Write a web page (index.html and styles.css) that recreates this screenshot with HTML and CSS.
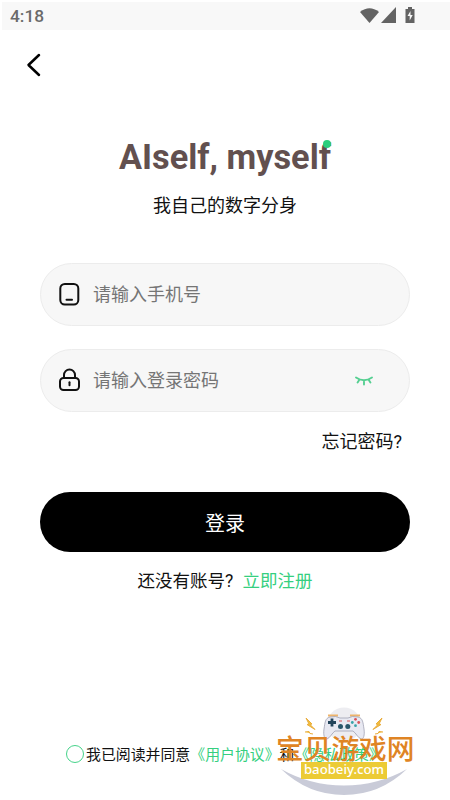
FILE: index.html
```html
<!DOCTYPE html>
<html lang="zh-CN">
<head>
<meta charset="utf-8">
<title>登录</title>
<link rel="stylesheet" href="styles.css">
</head>
<body>
<div class="screen">
  <header class="status">
    <span class="clock">4:18</span>
    <svg class="status-icons" width="56" height="18" viewBox="0 0 56 18">
      <path d="M0 5Q9.500-2.500 19 5L9.500 16Z"/>
      <path d="M36 0V16H21Z"/>
      <path d="M48 0h4v2h2.500v14h-9V2H48Z"/>
      <path class="bolt" d="M50.500 4l-3 5h2.200v4.500l3-5.500h-2.200z"/>
    </svg>
  </header>
  <nav class="nav">
    <svg width="16" height="24" viewBox="0 0 16 24"><path d="M13 2L2.500 12L13 22"/></svg>
  </nav>
  <main class="content">
    <h1 class="title">AIself, myself<i class="dot"></i></h1>
    <p class="subtitle">我自己的数字分身</p>
    <div class="field">
      <svg class="icon" width="22" height="24" viewBox="0 0 22 24"><rect x="2.300" y="2" width="18" height="20.500" rx="4.500"/><path d="M8.500 17.800h5.500"/></svg>
      <span class="placeholder">请输入手机号</span>
    </div>
    <div class="field">
      <svg class="icon" width="22" height="24" viewBox="0 0 22 24"><path d="M6 10V7a5.500 5.500 0 0 1 11 0v3"/><rect x="2" y="10" width="19" height="12" rx="3.500"/><path d="M11.500 14.300v3"/></svg>
      <span class="placeholder">请输入登录密码</span>
      <svg class="eye" width="18" height="10" viewBox="0 0 18 10"><path d="M1 1.500Q9 7 17 1.500M4.200 4L2.600 6.500M9 4.500V8.500M13.800 4L15.400 6.500"/></svg>
    </div>
    <a class="forgot">忘记密码?</a>
    <button class="login">登录</button>
    <p class="register"><span>还没有账号?</span><a class="link">立即注册</a></p>
  </main>
  <footer class="agreement">
    <span class="radio"></span>
    <span>我已阅读并同意<a class="link">《用户协议》</a>和<a class="link">《隐私政策》</a></span>
  </footer>
  <div class="watermark">
    <svg class="emblem" width="144" height="98" viewBox="0 0 144 98">
      <circle cx="72" cy="23.500" r="17" fill="#ededf1"/>
      <path d="M9 68Q36 94 72 94Q108 94 135 68Q106 84.500 72 84.500Q38 84.500 9 68Z" fill="#c9cbd8"/>
      <path d="M56 14.500h10M78 14.500h10" fill="none" stroke="#edb36a" stroke-width="2"/>
      <path d="M58 16Q64 14.500 68 17H76Q80 14.500 86 16C91 17 91 22 92 28C93 35 91 39 89 38C86 37 84 32 81 30H63C60 32 58 37 55 38C53 39 51 35 52 28C53 22 53 17 58 16Z" fill="#e8e9f2" stroke="#9fa1b3" stroke-width=".8"/>
      <path d="M56 21.500h8M60 17.500v8" stroke="#23445b" stroke-width="2.800"/>
      <g fill="#d95459"><circle cx="83.500" cy="18.300" r="1.400"/><circle cx="86.700" cy="21.500" r="1.400"/></g>
      <g fill="#39a4a8"><circle cx="83.500" cy="24.700" r="1.400"/><circle cx="80.300" cy="21.500" r="1.400"/></g>
      <path d="M67 20h3M75 20h3" stroke="#d95459" stroke-width="1.200"/>
      <g fill="#29566b"><circle cx="68.500" cy="25.500" r="2.500"/><circle cx="75.800" cy="25.500" r="2.500"/></g>
      <path d="M34 17l6 6-2 .5 5 5-8-5 2-.5zM110 17l-6 6 2 .5-5 5 8-5-2-.5zM33 31l4-.5 1 2 3 .5M111 31l-4-.5-1 2-3 .5" fill="#f3c23c" stroke="#e9ac3c"/>
    </svg>
    <span class="mark-name">宝贝游戏网</span>
    <span class="mark-url">baobeiy.com</span>
  </div>
</div>
</body>
</html>
```

FILE: styles.css
```css
* { box-sizing: border-box; }
body { margin: 0; background: #fff; }
.screen {
  position: relative;
  width: 450px;
  height: 800px;
  padding: 2px 0 0 2px;
  overflow: hidden;
  display: flex;
  flex-direction: column;
  font-family: "Roboto", "Noto Sans CJK SC", sans-serif;
  color: #111;
}
.status {
  height: 28px;
  flex: none;
  display: flex;
  align-items: center;
  justify-content: space-between;
  padding: 0 34px 0 8px;
  background: #f8f8f8;
}
.clock { font-size: 17.3px; font-weight: 500; color: #6a6a6a; line-height: 28px; }
.status-icons { fill: #636363; margin-top: 0; }
.status-icons .bolt { fill: #f8f8f8; }
.nav { height: 70px; padding: 23px 0 0 24px; }
.nav svg { display: block; fill: none; stroke: #000; stroke-width: 2.5; stroke-linecap: round; stroke-linejoin: round; }
.content { width: 370px; margin: 0 0 0 38px; display: flex; flex-direction: column; }
.title {
  position: relative;
  align-self: center;
  margin: 37px 0 0;
  font-size: 34.3px;
  line-height: 40px;
  font-weight: 700;
  color: #62504f;
  white-space: nowrap;
}
.dot { position: absolute; right: 0; top: 3px; width: 8px; height: 8px; border-radius: 50%; background: #2cce7c; }
.subtitle { margin: 15px 0 0; font-size: 18px; line-height: 28px; text-align: center; }
.field {
  height: 63px;
  display: flex;
  align-items: center;
  padding: 0 36px 0 18px;
  border: 1px solid #ececec;
  border-radius: 32px;
  background: #f7f7f7;
}
.subtitle + .field { margin-top: 42.5px; }
.field + .field { margin-top: 23px; }
.icon, .eye { fill: none; stroke: #111; stroke-width: 2; stroke-linecap: round; }
.icon { margin-left: -1px; }
.placeholder { position: relative; top: 1px; margin-left: 13px; flex: 1; font-size: 18px; line-height: 28px; color: #757575; }
.eye { position: relative; top: 1px; stroke: #55cf91; stroke-width: 1.9; }
.forgot { align-self: flex-end; margin: 16px 8px 0 0; font-size: 18px; line-height: 28px; }
.login {
  height: 60px;
  margin-top: 36.5px;
  padding: 2px 0 0;
  border: 0;
  border-radius: 30px;
  background: #000;
  color: #fff;
  font: 20px/30px "Noto Sans CJK SC", sans-serif;
}
.register { margin: 15px 0 0; display: flex; justify-content: center; gap: 9px; font-size: 17.5px; line-height: 28px; }
.link { color: #35cf80; }
.agreement { margin: auto 0 33px 64px; display: flex; align-items: center; gap: 2px; font-size: 14.9px; line-height: 24px; white-space: nowrap; }
.radio { width: 18px; height: 18px; margin-top: -2px; border: 1px solid #45d38a; border-radius: 50%; }
.watermark { position: absolute; left: 272px; top: 701px; width: 144px; height: 98px; }
.emblem { position: absolute; left: 0; top: 0; }
.mark-name {
  position: absolute;
  left: 4px;
  top: 26px;
  font: 500 27.7px/40px "Noto Sans CJK SC", sans-serif;
  color: #df8424;
  white-space: nowrap;
}
.mark-url {
  position: absolute;
  left: 29px;
  top: 61px;
  width: 86px;
  height: 17px;
  background: #eccb35;
  color: #fff;
  font: 500 13.2px/15px "Noto Sans", sans-serif;
  text-align: center;
}
```
